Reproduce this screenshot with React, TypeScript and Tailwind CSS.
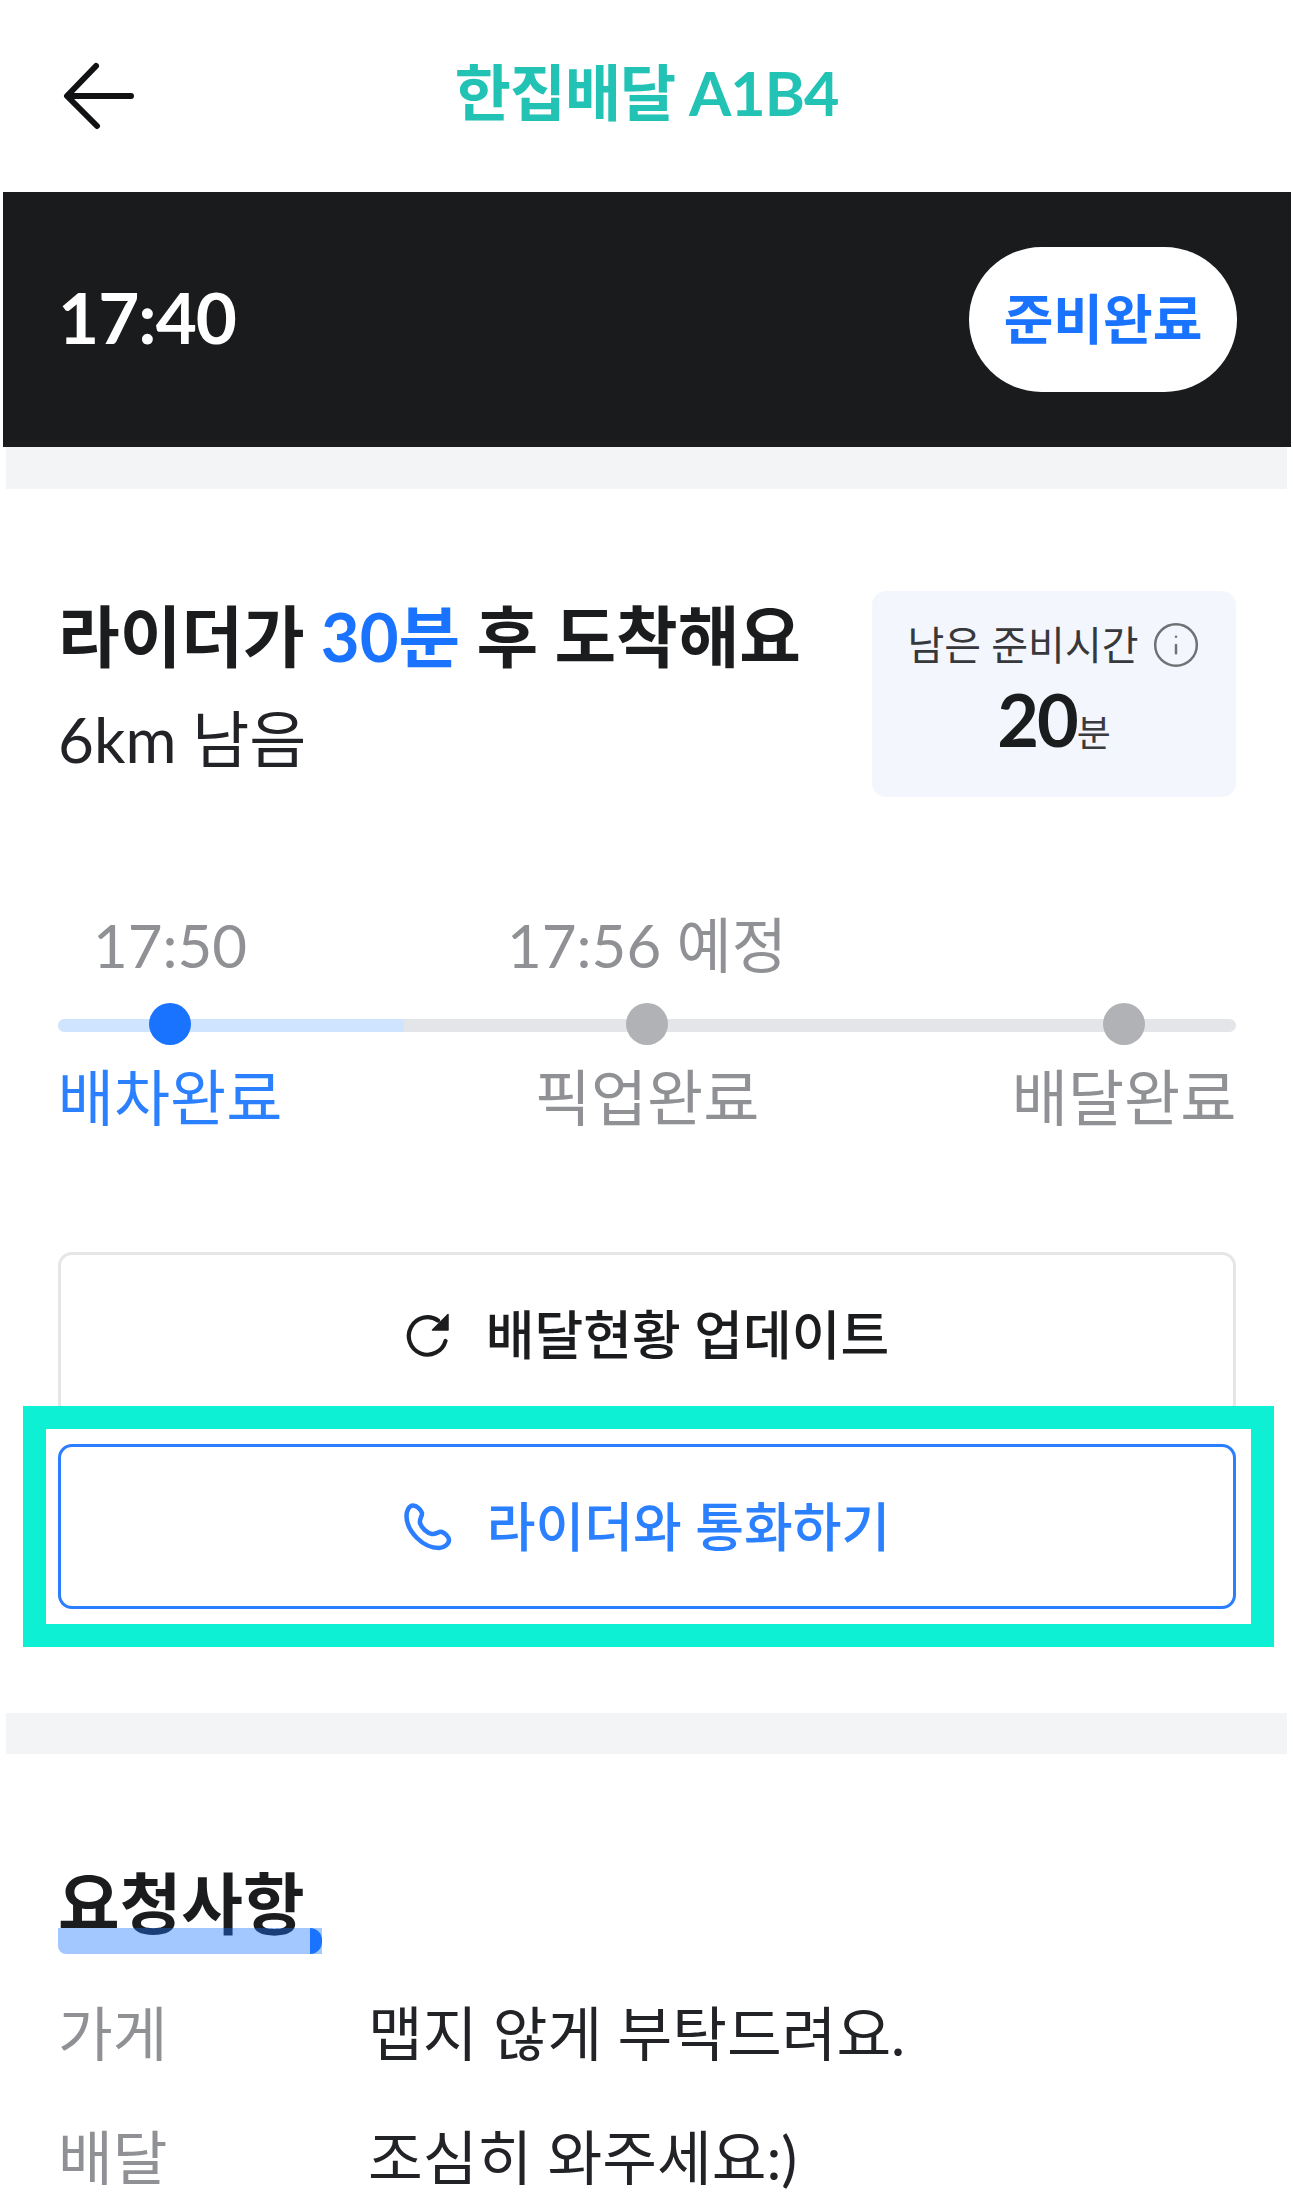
import { Info } from "lucide-react";

const FONT = "font-['Lato','Noto_Sans_CJK_KR',sans-serif]";

function BackArrow() {
  return (
    <svg width="72" height="68" viewBox="0 0 72 68" fill="none" stroke="#111214" strokeWidth="6" strokeLinecap="round" strokeLinejoin="round">
      <path d="M68 34H5" />
      <path d="M33 4 4 34l30 30" />
    </svg>
  );
}

function RefreshIcon() {
  return (
    <svg width="46" height="44" viewBox="0 0 46 44" fill="none" stroke="#1b1c1e" strokeWidth="4.2" strokeLinecap="round" strokeLinejoin="round">
      <path d="M33 7.5A18.7 18.7 0 1 0 40.5 28" />
      <path d="M43 1.5V17H27.5Z" fill="#1b1c1e" strokeWidth="1.5" />
    </svg>
  );
}

function PhoneIcon() {
  return (
    <svg width="48" height="48" viewBox="0 0 48 48" fill="none" stroke="#2b7eff" strokeWidth="4.5" strokeLinecap="round" strokeLinejoin="round">
      <path d="M9 2.5C13 2.5 17 7 18 10C18.5 13 15 16 16 20C17.5 25 23 30 28 31C32 31.5 35 28 38 29C41 30 45 34 45 37C45 41 40 45 35 45C27 45 20 42 13 35C6 28 2.5 20 2.5 13C2.5 8 5 2.5 9 2.5Z" />
    </svg>
  );
}

function Step({ time, label, active }: { time: string; label: string; active?: boolean }) {
  return (
    <div className="flex w-[224px] flex-col items-center">
      <div className="mb-[13px] h-[89px] whitespace-nowrap text-[60px] leading-[89px] text-[#8f9194]">{time}</div>
      <div className={`h-[42px] w-[42px] rounded-full ${active ? "bg-[#1a73ff]" : "bg-[#b0b2b5]"}`} />
      <div className={`mt-[12px] whitespace-nowrap text-[61px] leading-[82px] ${active ? "text-[#2b80ff]" : "text-[#8f9194]"}`}>{label}</div>
    </div>
  );
}

export default function App() {
  return (
    <div className={`h-[2201px] w-[1293px] overflow-hidden bg-white ${FONT}`}>
      {/* Top bar */}
      <header className="relative flex h-[192px] items-center justify-center">
        <div className="absolute left-[63px] top-[62px]">
          <BackArrow />
        </div>
        <h1 className="mb-[6px] text-[61px] font-bold tracking-[-1px] text-[#22c2b4]">한집배달 A1B4</h1>
      </header>

      {/* Pickup time bar */}
      <section className="ml-[3px] mr-[2px] flex h-[255px] items-center justify-between bg-[#1a1b1d] pl-[55px] pr-[54px]">
        <span className="mb-[5px] text-[71px] font-bold tracking-[-1px] text-white">17:40</span>
        <button className="flex h-[145px] w-[268px] items-center justify-center rounded-full bg-white text-[54px] font-bold text-[#1a73ff]">
          준비완료
        </button>
      </section>
      <div className="mx-[6px] h-[42px] bg-[#f3f4f6]" />

      {/* Rider status */}
      <section className="pl-[58px] pr-[57px] pt-[102px]">
        <div className="flex justify-between">
          <div className="pt-[3px]">
            <p className="text-[67px] font-bold leading-[84px] text-[#1b1c1e]">
              라이더가 <span className="text-[#1a73ff]">30분</span> 후 도착해요
            </p>
            <p className="mt-[21px] text-[62px] leading-[80px] text-[#222326]">6km 남음</p>
          </div>
          <div className="flex h-[206px] w-[364px] flex-col items-center rounded-[14px] bg-[#f3f6fd] pt-[26px]">
            <div className="flex items-center gap-[12px]">
              <span className="text-[40px] leading-[56px] text-[#37383b]">남은 준비시간</span>
              <Info size={50} strokeWidth={1.2} className="text-[#6f7174]" />
            </div>
            <div className="mt-[1px] flex items-baseline">
              <span className="text-[72px] font-bold leading-[90px] tracking-[-2px] text-[#1b1c1e]">20</span>
              <span className="text-[37px] text-[#3a3b3e]">분</span>
            </div>
          </div>
        </div>

        {/* Delivery progress */}
        <div className="relative mt-[104px] flex justify-between">
          <div className="absolute left-0 right-0 top-[118px] h-[13px] overflow-hidden rounded-full bg-[#e3e5e8]">
            <div className="h-full w-[346px] bg-[#cfe5ff]" />
          </div>
          <div className="relative flex w-full justify-between">
            <Step time="17:50" label="배차완료" active />
            <Step time="17:56 예정" label="픽업완료" />
            <Step time="" label="배달완료" />
          </div>
        </div>

        {/* Actions */}
        <div className="relative mt-[113px] flex flex-col gap-[27px]">
          <button className="flex h-[165px] items-center justify-center gap-[35px] rounded-[14px] border-[3px] border-[#e5e6e8] text-[53px] font-medium text-[#1b1c1e]">
            <RefreshIcon />
            <span>배달현황 업데이트</span>
          </button>
          <button className="flex h-[165px] items-center justify-center gap-[35px] rounded-[14px] border-[3px] border-[#2b7eff] text-[53px] font-medium text-[#2b80ff]">
            <PhoneIcon />
            <span>라이더와 통화하기</span>
          </button>
          <div className="pointer-events-none absolute left-[-35px] top-[154px] h-[241px] w-[1251px] border-[23px] border-[#0ef0d4]" />
        </div>
      </section>

      <div className="mx-[6px] mt-[104px] h-[41px] bg-[#f3f4f6]" />

      {/* Requests */}
      <section className="pl-[58px] pt-[107px]">
        <h2 className="relative inline-block pr-[17px] text-[67px] font-bold leading-[84px] text-[#1b1c1e]">
          <span>요청사항</span>
          <span className="absolute bottom-[-9px] left-0 right-0 h-[26px] rounded-bl-[8px] bg-[#1a73ff]/40" />
          <span className="absolute bottom-[-9px] right-0 h-[26px] w-[12px] rounded-r-full bg-[#1a73ff]" />
        </h2>
        <dl className="mt-[48px] grid grid-cols-[310px_1fr] gap-y-[44px] text-[59.5px] leading-[80px]">
          <dt className="text-[#8f9194]">가게</dt>
          <dd className="text-[#222326]">맵지 않게 부탁드려요.</dd>
          <dt className="text-[#8f9194]">배달</dt>
          <dd className="text-[#222326]">조심히 와주세요:)</dd>
        </dl>
      </section>
    </div>
  );
}
